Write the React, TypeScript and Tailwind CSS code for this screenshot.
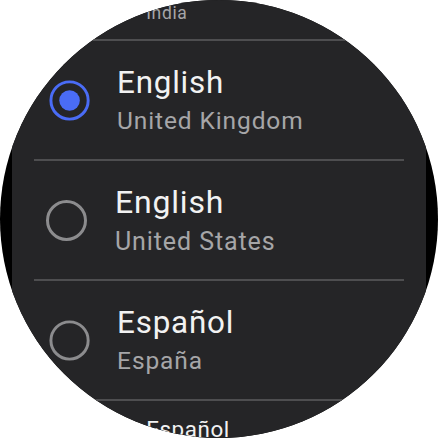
import React from "react";

type Lang = { name: string; region: string; selected?: boolean };

// Rows as they sit on the round screen; edge rows are scaled down.
const rows: { lang: Lang; scale: string }[] = [
  { lang: { name: "English", region: "India" }, scale: "scale-[0.7] origin-bottom" },
  { lang: { name: "English", region: "United Kingdom", selected: true }, scale: "scale-[0.98]" },
  { lang: { name: "English", region: "United States" }, scale: "" },
  { lang: { name: "Español", region: "España" }, scale: "scale-[0.98]" },
  { lang: { name: "Español", region: "Estados Unidos" }, scale: "scale-[0.7] origin-top" },
];

function Radio({ selected }: { selected?: boolean }) {
  if (selected) {
    return (
      <div className="flex h-[41px] w-[41px] shrink-0 items-center justify-center rounded-full border-[3px] border-[#4a6cf6]">
        <div className="h-[21px] w-[21px] rounded-full bg-[#4a6cf6]" />
      </div>
    );
  }
  return <div className="h-[41px] w-[41px] shrink-0 rounded-full border-[3px] border-[#8c8c8e]" />;
}

function Row({ lang, scale }: { lang: Lang; scale: string }) {
  return (
    <div className="h-[118px] w-full">
      <div className={`flex h-full w-full items-center pl-[34px] ${scale}`}>
        <Radio selected={lang.selected} />
        <div className="ml-[28px] flex flex-col">
          <span className="text-[32px] leading-[40px] tracking-[0.8px] text-[#f2f2f2]">{lang.name}</span>
          <span className="mt-[3px] text-[25px] leading-[34px] tracking-[0.9px] text-[#a6a6a8]">
            {lang.region}
          </span>
        </div>
      </div>
    </div>
  );
}

export default function App() {
  return (
    <div className="h-[438px] w-[438px] bg-white" style={{ fontFamily: "Roboto, 'Noto Sans', sans-serif" }}>
      <div className="h-full w-full overflow-hidden rounded-full bg-black">
        <div className="mx-3 h-full overflow-hidden bg-[#252527]">
          <div className="mt-[-79px] flex flex-col">
            {rows.map((r, i) => (
              <React.Fragment key={i}>
                {i > 0 && <div className="mx-[22px] h-[2px] shrink-0 bg-[#4e4e50]" />}
                <Row lang={r.lang} scale={r.scale} />
              </React.Fragment>
            ))}
          </div>
        </div>
      </div>
    </div>
  );
}
